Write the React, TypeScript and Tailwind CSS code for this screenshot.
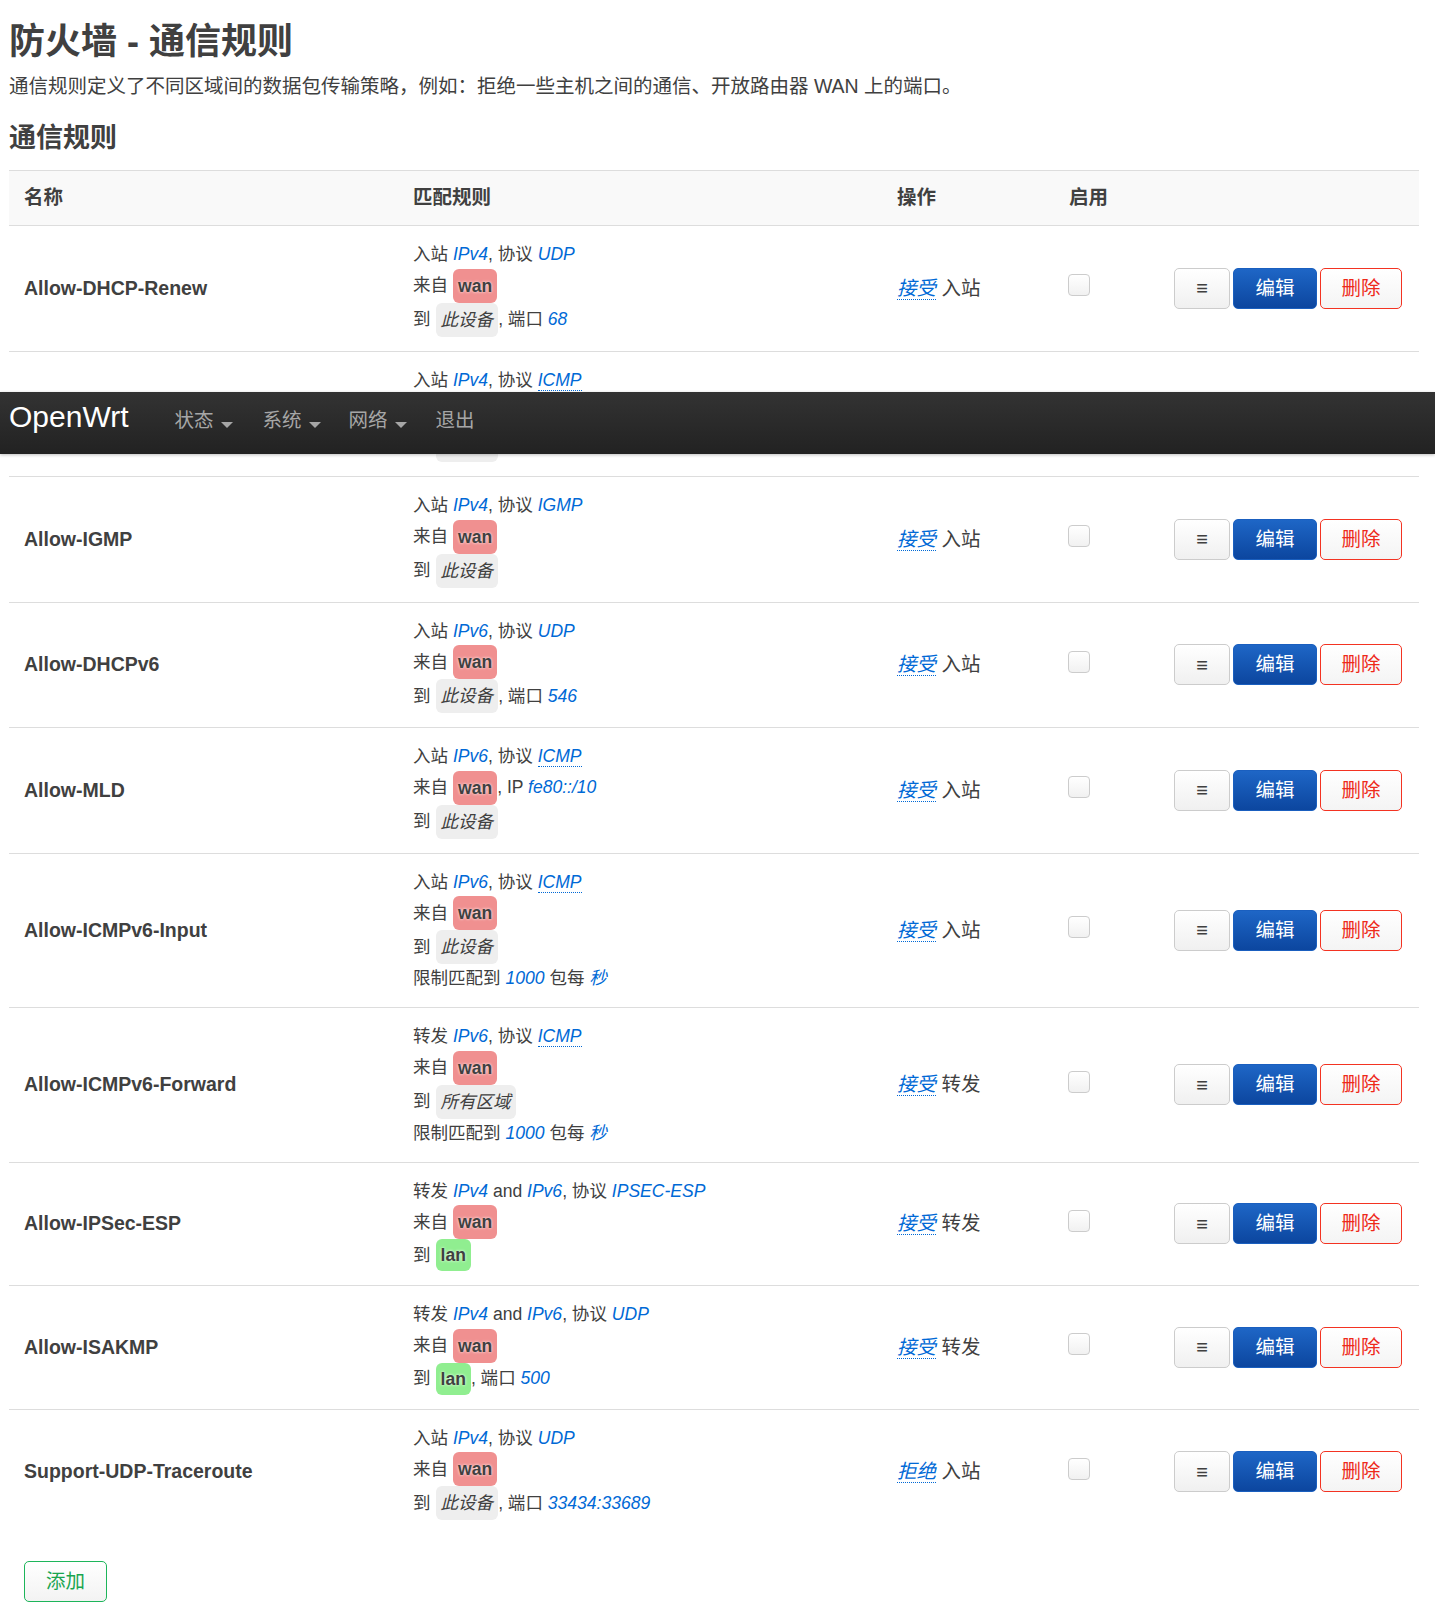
import React from "react";

const Val = ({ children }: any) => (
  <em className="text-[#0069d6]">{children}</em>
);

const Abbr = ({ children }: any) => (
  <em className="text-[#0069d6] border-b border-dotted border-[#0069d6]">
    {children}
  </em>
);

const Zone = ({ children, kind }: any) => {
  if (kind === "wan")
    return (
      <span className="ml-[5px] inline-block rounded-[6px] bg-[#f09090] px-[5px] py-[2px] leading-[30px] font-bold [text-shadow:0_0_3px_#fff]">
        {children}
      </span>
    );
  if (kind === "lan")
    return (
      <span className="ml-[5px] inline-block rounded-[6px] bg-[#90ee90] px-[5px] py-[2px] leading-[28px] font-bold [text-shadow:0_0_3px_#fff]">
        {children}
      </span>
    );
  return (
    <span className="ml-[5px] inline-block rounded-[6px] bg-[#eeeeee] px-[5px] py-[2px] leading-[30px] italic">
      {children}
    </span>
  );
};

const TextLine = ({ children }: any) => (
  <div className="leading-[28.5px]">{children}</div>
);

const ZoneLine = ({ label, zone, kind, rest }: any) => (
  <div className={`flex items-center ${kind === "lan" ? "h-[32px]" : "h-[34px]"}`}>
    <span>{label}</span>
    <Zone kind={kind}>{zone}</Zone>
    {rest && <span className="whitespace-pre">{rest}</span>}
  </div>
);

const Limit = () => (
  <div className="leading-[29px]">
    限制匹配到 <Val>1000</Val> 包每 <Val>秒</Val>
  </div>
);

const rules = [
  {
    name: "Allow-DHCP-Renew",
    match: (
      <>
        <TextLine>
          入站 <Val>IPv4</Val>, 协议 <Val>UDP</Val>
        </TextLine>
        <ZoneLine label="来自" zone="wan" kind="wan" />
        <ZoneLine label="到" zone="此设备" kind="dev" rest={<>, 端口 <Val>68</Val></>} />
      </>
    ),
    action: "接受",
    dir: "入站",
  },
  {
    name: "Allow-Ping",
    match: (
      <>
        <TextLine>
          入站 <Val>IPv4</Val>, 协议 <Abbr>ICMP</Abbr>
        </TextLine>
        <ZoneLine label="来自" zone="wan" kind="wan" />
        <ZoneLine label="到" zone="此设备" kind="dev" />
      </>
    ),
    action: "接受",
    dir: "入站",
  },
  {
    name: "Allow-IGMP",
    match: (
      <>
        <TextLine>
          入站 <Val>IPv4</Val>, 协议 <Val>IGMP</Val>
        </TextLine>
        <ZoneLine label="来自" zone="wan" kind="wan" />
        <ZoneLine label="到" zone="此设备" kind="dev" />
      </>
    ),
    action: "接受",
    dir: "入站",
  },
  {
    name: "Allow-DHCPv6",
    match: (
      <>
        <TextLine>
          入站 <Val>IPv6</Val>, 协议 <Val>UDP</Val>
        </TextLine>
        <ZoneLine label="来自" zone="wan" kind="wan" />
        <ZoneLine label="到" zone="此设备" kind="dev" rest={<>, 端口 <Val>546</Val></>} />
      </>
    ),
    action: "接受",
    dir: "入站",
  },
  {
    name: "Allow-MLD",
    match: (
      <>
        <TextLine>
          入站 <Val>IPv6</Val>, 协议 <Abbr>ICMP</Abbr>
        </TextLine>
        <ZoneLine label="来自" zone="wan" kind="wan" rest={<>, IP <Val>fe80::/10</Val></>} />
        <ZoneLine label="到" zone="此设备" kind="dev" />
      </>
    ),
    action: "接受",
    dir: "入站",
  },
  {
    name: "Allow-ICMPv6-Input",
    match: (
      <>
        <TextLine>
          入站 <Val>IPv6</Val>, 协议 <Abbr>ICMP</Abbr>
        </TextLine>
        <ZoneLine label="来自" zone="wan" kind="wan" />
        <ZoneLine label="到" zone="此设备" kind="dev" />
        <Limit />
      </>
    ),
    action: "接受",
    dir: "入站",
  },
  {
    name: "Allow-ICMPv6-Forward",
    match: (
      <>
        <TextLine>
          转发 <Val>IPv6</Val>, 协议 <Abbr>ICMP</Abbr>
        </TextLine>
        <ZoneLine label="来自" zone="wan" kind="wan" />
        <ZoneLine label="到" zone="所有区域" kind="dev" />
        <Limit />
      </>
    ),
    action: "接受",
    dir: "转发",
  },
  {
    name: "Allow-IPSec-ESP",
    match: (
      <>
        <TextLine>
          转发 <Val>IPv4</Val> and <Val>IPv6</Val>, 协议 <Val>IPSEC-ESP</Val>
        </TextLine>
        <ZoneLine label="来自" zone="wan" kind="wan" />
        <ZoneLine label="到" zone="lan" kind="lan" />
      </>
    ),
    action: "接受",
    dir: "转发",
  },
  {
    name: "Allow-ISAKMP",
    match: (
      <>
        <TextLine>
          转发 <Val>IPv4</Val> and <Val>IPv6</Val>, 协议 <Val>UDP</Val>
        </TextLine>
        <ZoneLine label="来自" zone="wan" kind="wan" />
        <ZoneLine label="到" zone="lan" kind="lan" rest={<>, 端口 <Val>500</Val></>} />
      </>
    ),
    action: "接受",
    dir: "转发",
  },
  {
    name: "Support-UDP-Traceroute",
    match: (
      <>
        <TextLine>
          入站 <Val>IPv4</Val>, 协议 <Val>UDP</Val>
        </TextLine>
        <ZoneLine label="来自" zone="wan" kind="wan" />
        <ZoneLine label="到" zone="此设备" kind="dev" rest={<>, 端口 <Val>33434:33689</Val></>} />
      </>
    ),
    action: "拒绝",
    dir: "入站",
  },
];

const Caret = () => (
  <span className="ml-[7px] mt-[8px] inline-block h-0 w-0 border-x-[6px] border-t-[6px] border-x-transparent border-t-[#a6a6a6]" />
);

const App = () => {
  return (
    <div className="relative min-h-[1612px] bg-white font-['Liberation_Sans','Noto_Sans_CJK_SC',sans-serif] text-[19.5px] text-[#404040]">
      <div className="ml-[9px] w-[1410px] pt-[22px]">
        <h2 className="text-[36px] font-bold leading-[40px]">防火墙 - 通信规则</h2>
        <div className="mt-[10px] leading-[29px]">
          通信规则定义了不同区域间的数据包传输策略，例如：拒绝一些主机之间的通信、开放路由器 WAN 上的端口。
        </div>
        <h3 className="mt-[22px] text-[27px] font-bold leading-[30px]">通信规则</h3>

        <div className="mt-[17px]">
          <div className="grid h-[56px] grid-cols-[389px_484px_172px_106px_259px] items-center border-y border-[#ddd] bg-[#f9f9f9] font-bold">
            <div className="pl-[15px]">名称</div>
            <div className="pl-[15px]">匹配规则</div>
            <div className="pl-[15px]">操作</div>
            <div className="pl-[15px]">启用</div>
            <div />
          </div>

          {rules.map((r, i) => (
            <div
              key={r.name}
              className={`grid grid-cols-[389px_484px_172px_106px_259px] items-center ${
                i < rules.length - 1 ? "border-b border-[#ddd]" : ""
              }`}
            >
              <div className="pl-[15px] font-bold">{r.name}</div>
              <div className="py-[14px] pl-[15px] text-[17.55px]">{r.match}</div>
              <div className="pl-[15px]">
                <em className="text-[#0069d6] border-b border-dotted border-[#0069d6]">{r.action}</em> {r.dir}
              </div>
              <div className="pb-[6px] pl-[14px]">
                <span className="block h-[22px] w-[22px] rounded-[4px] border border-[#cccccc] bg-linear-to-b from-white to-[#f1f1f1]" />
              </div>
              <div className="flex justify-end gap-[3px] pr-[17px]">
                <button className="flex h-[41px] w-[56px] items-center justify-center rounded-[5px] border border-[#cccccc] bg-linear-to-b from-white to-[#f0f0f0] text-[20px] font-bold text-[#404040]">
                  ≡
                </button>
                <button className="flex h-[41px] w-[84px] items-center justify-center rounded-[5px] border border-[#1a5fbf] bg-linear-to-b from-[#1e66c6] to-[#0c469f] text-white">
                  编辑
                </button>
                <button className="flex h-[41px] w-[82px] items-center justify-center rounded-[5px] border border-[#f33322] bg-linear-to-b from-white to-[#f4f4f4] text-[#ee2a1a]">
                  删除
                </button>
              </div>
            </div>
          ))}
        </div>

        <button className="ml-[15px] mt-[27px] flex h-[41px] w-[83px] items-center justify-center rounded-[5px] border border-[#1db55a] bg-linear-to-b from-white to-[#f3f3f3] text-[#1aa550]">
          添加
        </button>
      </div>

      <div className="absolute left-0 top-[392px] z-10 flex h-[62px] w-full items-center bg-linear-to-b from-[#333333] to-[#222222] pb-[8px] shadow-[0_1px_3px_rgba(0,0,0,0.25)]">
        <span className="-mt-[5px] ml-[9px] text-[30px] text-white">OpenWrt</span>
        <nav className="ml-[46px] mt-[4px] flex items-center text-[#a6a6a6]">
          <span className="flex items-center">状态<Caret /></span>
          <span className="ml-[30px] flex items-center">系统<Caret /></span>
          <span className="ml-[28px] flex items-center">网络<Caret /></span>
          <span className="ml-[29px]">退出</span>
        </nav>
      </div>
    </div>
  );
};

export default App;
